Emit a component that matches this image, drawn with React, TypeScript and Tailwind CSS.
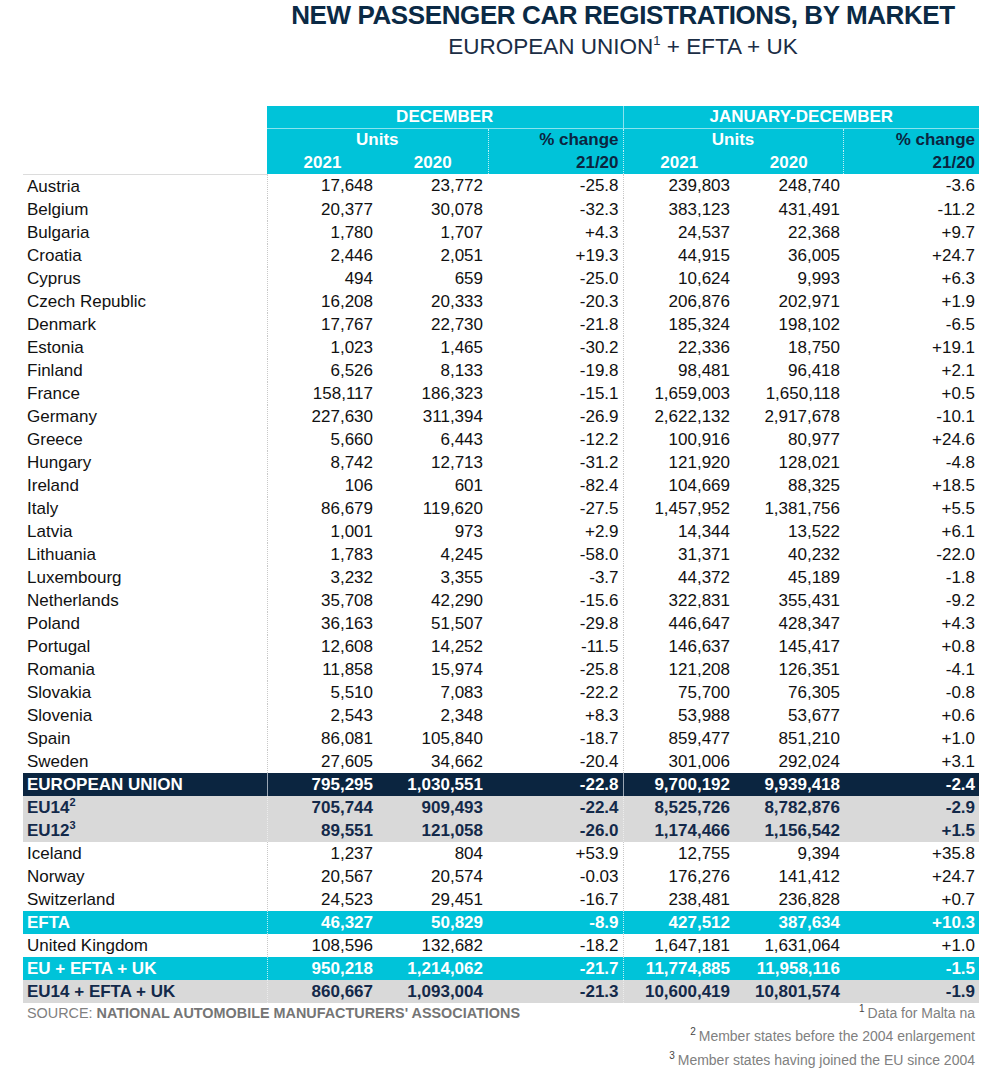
import React from "react";

type Row = [string, string, string, string, string, string, string];

const countries: Row[] = [
  ["Austria", "17,648", "23,772", "-25.8", "239,803", "248,740", "-3.6"],
  ["Belgium", "20,377", "30,078", "-32.3", "383,123", "431,491", "-11.2"],
  ["Bulgaria", "1,780", "1,707", "+4.3", "24,537", "22,368", "+9.7"],
  ["Croatia", "2,446", "2,051", "+19.3", "44,915", "36,005", "+24.7"],
  ["Cyprus", "494", "659", "-25.0", "10,624", "9,993", "+6.3"],
  ["Czech Republic", "16,208", "20,333", "-20.3", "206,876", "202,971", "+1.9"],
  ["Denmark", "17,767", "22,730", "-21.8", "185,324", "198,102", "-6.5"],
  ["Estonia", "1,023", "1,465", "-30.2", "22,336", "18,750", "+19.1"],
  ["Finland", "6,526", "8,133", "-19.8", "98,481", "96,418", "+2.1"],
  ["France", "158,117", "186,323", "-15.1", "1,659,003", "1,650,118", "+0.5"],
  ["Germany", "227,630", "311,394", "-26.9", "2,622,132", "2,917,678", "-10.1"],
  ["Greece", "5,660", "6,443", "-12.2", "100,916", "80,977", "+24.6"],
  ["Hungary", "8,742", "12,713", "-31.2", "121,920", "128,021", "-4.8"],
  ["Ireland", "106", "601", "-82.4", "104,669", "88,325", "+18.5"],
  ["Italy", "86,679", "119,620", "-27.5", "1,457,952", "1,381,756", "+5.5"],
  ["Latvia", "1,001", "973", "+2.9", "14,344", "13,522", "+6.1"],
  ["Lithuania", "1,783", "4,245", "-58.0", "31,371", "40,232", "-22.0"],
  ["Luxembourg", "3,232", "3,355", "-3.7", "44,372", "45,189", "-1.8"],
  ["Netherlands", "35,708", "42,290", "-15.6", "322,831", "355,431", "-9.2"],
  ["Poland", "36,163", "51,507", "-29.8", "446,647", "428,347", "+4.3"],
  ["Portugal", "12,608", "14,252", "-11.5", "146,637", "145,417", "+0.8"],
  ["Romania", "11,858", "15,974", "-25.8", "121,208", "126,351", "-4.1"],
  ["Slovakia", "5,510", "7,083", "-22.2", "75,700", "76,305", "-0.8"],
  ["Slovenia", "2,543", "2,348", "+8.3", "53,988", "53,677", "+0.6"],
  ["Spain", "86,081", "105,840", "-18.7", "859,477", "851,210", "+1.0"],
  ["Sweden", "27,605", "34,662", "-20.4", "301,006", "292,024", "+3.1"],
];

type Kind = "plain" | "navy" | "gray" | "cyan";

const rows: { kind: Kind; cells: Row; sup?: string }[] = [
  ...countries.map((c) => ({ kind: "plain" as Kind, cells: c })),
  { kind: "navy", cells: ["EUROPEAN UNION", "795,295", "1,030,551", "-22.8", "9,700,192", "9,939,418", "-2.4"] },
  { kind: "gray", cells: ["EU14", "705,744", "909,493", "-22.4", "8,525,726", "8,782,876", "-2.9"], sup: "2" },
  { kind: "gray", cells: ["EU12", "89,551", "121,058", "-26.0", "1,174,466", "1,156,542", "+1.5"], sup: "3" },
  { kind: "plain", cells: ["Iceland", "1,237", "804", "+53.9", "12,755", "9,394", "+35.8"] },
  { kind: "plain", cells: ["Norway", "20,567", "20,574", "-0.03", "176,276", "141,412", "+24.7"] },
  { kind: "plain", cells: ["Switzerland", "24,523", "29,451", "-16.7", "238,481", "236,828", "+0.7"] },
  { kind: "cyan", cells: ["EFTA", "46,327", "50,829", "-8.9", "427,512", "387,634", "+10.3"] },
  { kind: "plain", cells: ["United Kingdom", "108,596", "132,682", "-18.2", "1,647,181", "1,631,064", "+1.0"] },
  { kind: "cyan", cells: ["EU + EFTA + UK", "950,218", "1,214,062", "-21.7", "11,774,885", "11,958,116", "-1.5"] },
  { kind: "gray", cells: ["EU14 + EFTA + UK", "860,667", "1,093,004", "-21.3", "10,600,419", "10,801,574", "-1.9"] },
];

const rowStyle: Record<Kind, string> = {
  plain: "bg-white text-[#111111]",
  navy: "bg-[#0b2540] text-white font-bold",
  gray: "bg-[#d9d9d9] text-[#13294a] font-bold",
  cyan: "bg-[#00c3d9] text-white font-bold",
};

const divider: Record<Kind, string> = {
  plain: "border-l border-dotted border-[#c8c8c8]",
  navy: "border-l border-solid border-[#9aa6b4]",
  gray: "border-l border-dotted border-[#ececec]",
  cyan: "border-l border-dotted border-[#bdeff5]",
};

function Note({ n, children }: { n: string; children: React.ReactNode }) {
  return (
    <p>
      <span className="text-[10px] leading-none text-[#444] relative -top-[6px] mr-[3px]">{n}</span>
      {children}
    </p>
  );
}

export default function App() {
  return (
    <div className="w-[1000px] h-[1078px] bg-white font-['Liberation_Sans',_Arial,_sans-serif]">
      {/* Title */}
      <div className="pl-[267px] pr-[21px] text-center">
        <h1 className="text-[26px] leading-[30px] font-bold text-[#0b2a45] tracking-[-0.4px]">
          NEW PASSENGER CAR REGISTRATIONS, BY MARKET
        </h1>
        <p className="mt-[2px] text-[22.5px] leading-[30px] text-[#1b2d45]">
          EUROPEAN UNION<span className="text-[13px] leading-none relative -top-[9px]">1</span> + EFTA + UK
        </p>
      </div>

      {/* Table */}
      <table className="ml-[23px] mt-[44px] border-collapse table-fixed w-[956px] text-[17px] leading-[23px]">
        <colgroup>
          <col className="w-[244px]" />
          <col className="w-[111px]" />
          <col className="w-[110px]" />
          <col className="w-[135px]" />
          <col className="w-[112px]" />
          <col className="w-[108px]" />
          <col className="w-[136px]" />
        </colgroup>
        <thead className="font-bold">
          <tr className="h-[22px] leading-[22px]">
            <th className="p-0" />
            <th colSpan={3} className="p-0 bg-[#00c3d9] text-white text-center border-b border-[#8ae3ee]">
              DECEMBER
            </th>
            <th colSpan={3} className="p-0 bg-[#00c3d9] text-white text-center border-b border-l border-[#8ae3ee]">
              JANUARY-DECEMBER
            </th>
          </tr>
          <tr className="h-[22px] leading-[22px]">
            <th className="p-0" />
            <th colSpan={2} className="p-0 bg-[#00c3d9] text-white text-center">Units</th>
            <th className="p-0 pr-[4px] bg-[#00c3d9] text-[#0b2540] text-right border-l border-dotted border-[#bdeff5]">% change</th>
            <th colSpan={2} className="p-0 bg-[#00c3d9] text-white text-center border-l border-dotted border-[#bdeff5]">Units</th>
            <th className="p-0 pr-[4px] bg-[#00c3d9] text-[#0b2540] text-right border-l border-dotted border-[#bdeff5]">% change</th>
          </tr>
          <tr className="h-[23px]">
            <th className="p-0 border-b border-[#dcdcdc]" />
            <th className="p-0 bg-[#00c3d9] text-white text-center">2021</th>
            <th className="p-0 bg-[#00c3d9] text-white text-center">2020</th>
            <th className="p-0 pr-[4px] bg-[#00c3d9] text-[#0b2540] text-right border-l border-dotted border-[#bdeff5]">21/20</th>
            <th className="p-0 bg-[#00c3d9] text-white text-center border-l border-dotted border-[#bdeff5]">2021</th>
            <th className="p-0 bg-[#00c3d9] text-white text-center">2020</th>
            <th className="p-0 pr-[4px] bg-[#00c3d9] text-[#0b2540] text-right border-l border-dotted border-[#bdeff5]">21/20</th>
          </tr>
        </thead>
        <tbody>
          {rows.map((r) => (
            <tr key={r.cells[0]} className={`h-[23px] ${rowStyle[r.kind]}`}>
              <td className="p-0 pl-[4px] whitespace-nowrap">
                {r.cells[0]}
                {r.sup && <span className="text-[11px] leading-none relative -top-[7px]">{r.sup}</span>}
              </td>
              <td className={`p-0 pr-[5px] text-right ${divider[r.kind]}`}>{r.cells[1]}</td>
              <td className="p-0 pr-[5px] text-right">{r.cells[2]}</td>
              <td className="p-0 pr-[4px] text-right">{r.cells[3]}</td>
              <td className={`p-0 pr-[5px] text-right ${divider[r.kind]}`}>{r.cells[4]}</td>
              <td className="p-0 pr-[3px] text-right">{r.cells[5]}</td>
              <td className="p-0 pr-[4px] text-right">{r.cells[6]}</td>
            </tr>
          ))}
        </tbody>
      </table>

      {/* Footer */}
      <div className="flex justify-between ml-[27px] mr-[25px] -mt-[1px] text-[#808080]">
        <p className="text-[14.4px] leading-[23px] whitespace-nowrap">
          SOURCE: <span className="font-bold text-[#757575]">NATIONAL AUTOMOBILE MANUFACTURERS' ASSOCIATIONS</span>
        </p>
        <div className="text-right text-[14px] leading-[23.5px]">
          <Note n="1">Data for Malta na</Note>
          <Note n="2">Member states before the 2004 enlargement</Note>
          <Note n="3">Member states having joined the EU since 2004</Note>
        </div>
      </div>
    </div>
  );
}
